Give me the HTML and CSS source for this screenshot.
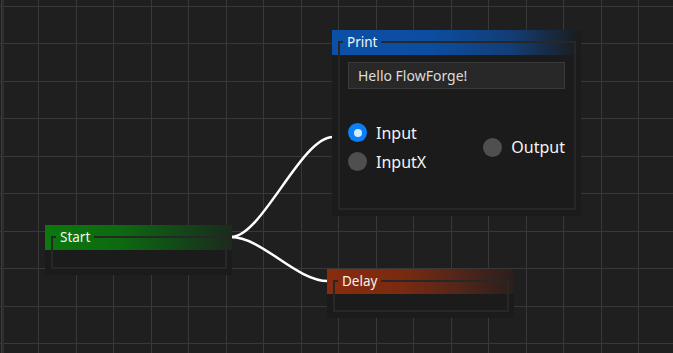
FILE: index.html
```html
<!DOCTYPE html>
<html>
<head>
<meta charset="utf-8">
<link rel="stylesheet" href="styles.css">
</head>
<body>
<div class="canvas">
  <svg class="wires" width="673" height="353" viewBox="0 0 673 353">
    <path d="M231 237 C262 237 301 137 333 137" />
    <path d="M231 237 C262 237 296 281 328 281" />
  </svg>

  <div class="node node-print" style="left:332px;top:30px;">
    <fieldset class="frame">
      <legend>Print</legend>
      <div class="body">
        <div class="textbox">Hello FlowForge!</div>
        <div class="ports">
          <div class="port-col">
            <div class="port"><span class="dot dot-on"></span><span>Input</span></div>
            <div class="port"><span class="dot"></span><span>InputX</span></div>
          </div>
          <div class="port-col">
            <div class="port"><span class="dot"></span><span>Output</span></div>
          </div>
        </div>
      </div>
    </fieldset>
  </div>

  <div class="node node-start" style="left:45px;top:225px;">
    <fieldset class="frame">
      <legend>Start</legend>
      <div class="empty"></div>
    </fieldset>
  </div>

  <div class="node node-delay" style="left:327px;top:269px;">
    <fieldset class="frame">
      <legend>Delay</legend>
      <div class="empty short"></div>
    </fieldset>
  </div>
</div>
</body>
</html>
```

FILE: styles.css
```css
html, body {
  margin: 0;
  padding: 0;
  background: #1f1f1f;
}

.canvas {
  position: relative;
  width: 673px;
  height: 353px;
  overflow: hidden;
  background-color: #1f1f1f;
  background-image:
    linear-gradient(90deg, #383838 1px, transparent 1px),
    linear-gradient(90deg, transparent 37px, #383838 37px, #383838 38px, transparent 38px),
    linear-gradient(180deg, #383838 1px, transparent 1px),
    linear-gradient(180deg, transparent 37px, #383838 37px, #383838 38px, transparent 38px);
  background-size: 75px 75px;
  background-position: 1px 6px;
  font-family: "Noto Sans", "Open Sans", sans-serif;
  color: #f2f2f2;
}

.canvas::before {
  content: "";
  position: absolute;
  left: 2px;
  top: 0;
  width: 2px;
  height: 100%;
  background: #2e2e2e;
}

.wires {
  position: absolute;
  left: 0;
  top: 0;
}

.wires path {
  fill: none;
  stroke: #ffffff;
  stroke-width: 2.5;
}

.node {
  position: absolute;
  box-sizing: border-box;
  padding: 2px 5px 6px 6px;
  background-color: #1b1b1b;
  background-repeat: no-repeat;
  background-size: 100% 25px;
}

.node-print {
  width: 249px;
  background-image: linear-gradient(90deg, #0b50a8 0%, #0b4da0 40%, #133d75 72%, #1b1b1b 100%);
}

.node-start {
  width: 187px;
  background-image: linear-gradient(90deg, #0b780c 0%, #0d6a10 40%, #124a18 70%, #1b2a1c 100%);
}

.node-delay {
  width: 187px;
  background-image: linear-gradient(90deg, #892b0e 0%, #7a2a10 40%, #53261a 70%, #2a1e1c 100%);
}

.frame {
  margin: 0;
  padding: 0;
  border: 2px solid #272727;
  min-width: 0;
}

.frame legend {
  margin-left: 3px;
  padding: 0 4px;
  font-size: 13.5px;
  line-height: 20px;
  color: #f4f4f4;
}

.body {
  padding: 10px 9px 0 8px;
  height: 146px;
}

.textbox {
  box-sizing: border-box;
  height: 27px;
  padding: 0 9px;
  background: #282828;
  border: 1px solid #3a3a3a;
  font-size: 14px;
  line-height: 25px;
  color: #dcdcdc;
}

.ports {
  margin-top: 34px;
  display: flex;
  justify-content: space-between;
  align-items: center;
}

.port-col {
  display: flex;
  flex-direction: column;
  gap: 10px;
}

.port {
  display: flex;
  align-items: center;
  gap: 9px;
  height: 19px;
  font-size: 16px;
  color: #f4f4f4;
}

.dot {
  box-sizing: border-box;
  width: 19px;
  height: 19px;
  border-radius: 50%;
  background: #4f4f4f;
  flex: none;
}

.dot-on {
  background: #0a80f8;
  position: relative;
}

.dot-on::after {
  content: "";
  position: absolute;
  left: 5.5px;
  top: 5.5px;
  width: 8px;
  height: 8px;
  border-radius: 50%;
  background: #d4e8ff;
}

.empty {
  height: 20px;
}

.empty.short {
  height: 19px;
}
```
